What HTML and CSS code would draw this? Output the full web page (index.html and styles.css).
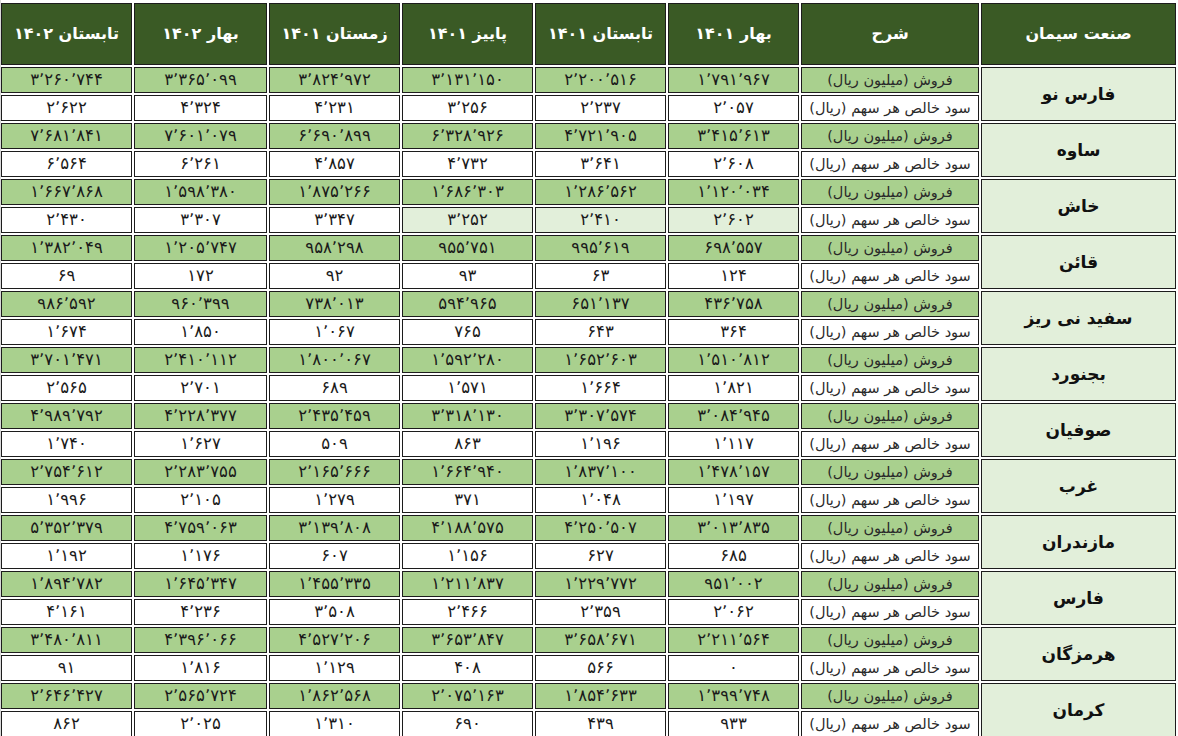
FILE: index.html
```html
<!DOCTYPE html>
<html lang="fa">
<head>
<meta charset="utf-8">
<title>صنعت سیمان</title>
<link rel="stylesheet" href="styles.css">
</head>
<body>
<div class="sheet" dir="rtl">
<table class="grid">
<colgroup>
<col class="c-name"><col class="c-desc"><col class="c-q"><col class="c-q"><col class="c-q"><col class="c-q"><col class="c-q5"><col class="c-q">
</colgroup>
<thead>
<tr class="head">
<th>صنعت سیمان</th><th>شرح</th><th>بهار ۱۴۰۱</th><th>تابستان ۱۴۰۱</th><th>پاییز ۱۴۰۱</th><th>زمستان ۱۴۰۱</th><th>بهار ۱۴۰۲</th><th>تابستان ۱۴۰۲</th>
</tr>
</thead>
<tbody>
<tr class="sales"><td class="name" rowspan="2">فارس نو</td><td class="desc">فروش (میلیون ریال)</td><td>۱٬۷۹۱٬۹۶۷</td><td>۲٬۲۰۰٬۵۱۶</td><td>۳٬۱۳۱٬۱۵۰</td><td>۳٬۸۲۴٬۹۷۲</td><td>۳٬۳۶۵٬۰۹۹</td><td>۳٬۲۶۰٬۷۴۴</td></tr>
<tr class="eps"><td class="desc">سود خالص هر سهم (ریال)</td><td>۲٬۰۵۷</td><td>۲٬۲۳۷</td><td>۳٬۲۵۶</td><td>۴٬۲۳۱</td><td>۴٬۳۲۴</td><td>۲٬۶۲۲</td></tr>

<tr class="sales"><td class="name" rowspan="2">ساوه</td><td class="desc">فروش (میلیون ریال)</td><td>۳٬۴۱۵٬۶۱۳</td><td>۴٬۷۲۱٬۹۰۵</td><td>۶٬۳۲۸٬۹۲۶</td><td>۶٬۶۹۰٬۸۹۹</td><td>۷٬۶۰۱٬۰۷۹</td><td>۷٬۶۸۱٬۸۴۱</td></tr>
<tr class="eps"><td class="desc">سود خالص هر سهم (ریال)</td><td>۲٬۶۰۸</td><td>۳٬۶۴۱</td><td>۴٬۷۳۲</td><td>۴٬۸۵۷</td><td>۶٬۲۶۱</td><td>۶٬۵۶۴</td></tr>

<tr class="sales"><td class="name" rowspan="2">خاش</td><td class="desc">فروش (میلیون ریال)</td><td>۱٬۱۲۰٬۰۳۴</td><td>۱٬۲۸۶٬۵۶۲</td><td>۱٬۶۸۶٬۳۰۳</td><td>۱٬۸۷۵٬۲۶۶</td><td>۱٬۵۹۸٬۳۸۰</td><td>۱٬۶۶۷٬۸۶۸</td></tr>
<tr class="eps"><td class="desc">سود خالص هر سهم (ریال)</td><td class="mark">۲٬۶۰۲</td><td class="mark">۲٬۴۱۰</td><td class="mark">۳٬۲۵۲</td><td>۳٬۳۴۷</td><td>۳٬۳۰۷</td><td>۲٬۴۳۰</td></tr>

<tr class="sales"><td class="name" rowspan="2">قائن</td><td class="desc">فروش (میلیون ریال)</td><td>۶۹۸٬۵۵۷</td><td>۹۹۵٬۶۱۹</td><td>۹۵۵٬۷۵۱</td><td>۹۵۸٬۲۹۸</td><td>۱٬۲۰۵٬۷۴۷</td><td>۱٬۳۸۲٬۰۴۹</td></tr>
<tr class="eps"><td class="desc">سود خالص هر سهم (ریال)</td><td>۱۲۴</td><td>۶۳</td><td>۹۳</td><td>۹۲</td><td>۱۷۲</td><td>۶۹</td></tr>

<tr class="sales"><td class="name" rowspan="2">سفید نی ریز</td><td class="desc">فروش (میلیون ریال)</td><td>۴۳۶٬۷۵۸</td><td>۶۵۱٬۱۳۷</td><td>۵۹۴٬۹۶۵</td><td>۷۳۸٬۰۱۳</td><td>۹۶۰٬۳۹۹</td><td>۹۸۶٬۵۹۲</td></tr>
<tr class="eps"><td class="desc">سود خالص هر سهم (ریال)</td><td>۳۶۴</td><td>۶۴۳</td><td>۷۶۵</td><td>۱٬۰۶۷</td><td>۱٬۸۵۰</td><td>۱٬۶۷۴</td></tr>

<tr class="sales"><td class="name" rowspan="2">بجنورد</td><td class="desc">فروش (میلیون ریال)</td><td>۱٬۵۱۰٬۸۱۲</td><td>۱٬۶۵۲٬۶۰۳</td><td>۱٬۵۹۲٬۲۸۰</td><td>۱٬۸۰۰٬۰۶۷</td><td>۲٬۴۱۰٬۱۱۲</td><td>۳٬۷۰۱٬۴۷۱</td></tr>
<tr class="eps"><td class="desc">سود خالص هر سهم (ریال)</td><td>۱٬۸۲۱</td><td>۱٬۶۶۴</td><td>۱٬۵۷۱</td><td>۶۸۹</td><td>۲٬۷۰۱</td><td>۲٬۵۶۵</td></tr>

<tr class="sales"><td class="name" rowspan="2">صوفیان</td><td class="desc">فروش (میلیون ریال)</td><td>۳٬۰۸۴٬۹۴۵</td><td>۳٬۳۰۷٬۵۷۴</td><td>۳٬۳۱۸٬۱۳۰</td><td>۲٬۴۳۵٬۴۵۹</td><td>۴٬۲۲۸٬۳۷۷</td><td>۴٬۹۸۹٬۷۹۲</td></tr>
<tr class="eps"><td class="desc">سود خالص هر سهم (ریال)</td><td>۱٬۱۱۷</td><td>۱٬۱۹۶</td><td>۸۶۳</td><td>۵۰۹</td><td>۱٬۶۲۷</td><td>۱٬۷۴۰</td></tr>

<tr class="sales"><td class="name" rowspan="2">غرب</td><td class="desc">فروش (میلیون ریال)</td><td>۱٬۴۷۸٬۱۵۷</td><td>۱٬۸۳۷٬۱۰۰</td><td>۱٬۶۶۴٬۹۴۰</td><td>۲٬۱۶۵٬۶۶۶</td><td>۲٬۲۸۳٬۷۵۵</td><td>۲٬۷۵۴٬۶۱۲</td></tr>
<tr class="eps"><td class="desc">سود خالص هر سهم (ریال)</td><td>۱٬۱۹۷</td><td>۱٬۰۴۸</td><td>۳۷۱</td><td>۱٬۲۷۹</td><td>۲٬۱۰۵</td><td>۱٬۹۹۶</td></tr>

<tr class="sales"><td class="name" rowspan="2">مازندران</td><td class="desc">فروش (میلیون ریال)</td><td>۳٬۰۱۳٬۸۳۵</td><td>۴٬۲۵۰٬۵۰۷</td><td>۴٬۱۸۸٬۵۷۵</td><td>۳٬۱۳۹٬۸۰۸</td><td>۴٬۷۵۹٬۰۶۳</td><td>۵٬۳۵۲٬۳۷۹</td></tr>
<tr class="eps"><td class="desc">سود خالص هر سهم (ریال)</td><td>۶۸۵</td><td>۶۲۷</td><td>۱٬۱۵۶</td><td>۶۰۷</td><td>۱٬۱۷۶</td><td>۱٬۱۹۲</td></tr>

<tr class="sales"><td class="name" rowspan="2">فارس</td><td class="desc">فروش (میلیون ریال)</td><td>۹۵۱٬۰۰۲</td><td>۱٬۲۲۹٬۷۷۲</td><td>۱٬۲۱۱٬۸۳۷</td><td>۱٬۴۵۵٬۳۳۵</td><td>۱٬۶۴۵٬۳۴۷</td><td>۱٬۸۹۴٬۷۸۲</td></tr>
<tr class="eps"><td class="desc">سود خالص هر سهم (ریال)</td><td>۲٬۰۶۲</td><td>۲٬۳۵۹</td><td>۲٬۴۶۶</td><td>۳٬۵۰۸</td><td>۴٬۲۳۶</td><td>۴٬۱۶۱</td></tr>

<tr class="sales"><td class="name" rowspan="2">هرمزگان</td><td class="desc">فروش (میلیون ریال)</td><td>۲٬۲۱۱٬۵۶۴</td><td>۳٬۶۵۸٬۶۷۱</td><td>۳٬۶۵۳٬۸۴۷</td><td>۴٬۵۲۷٬۲۰۶</td><td>۴٬۳۹۶٬۰۶۶</td><td>۳٬۴۸۰٬۸۱۱</td></tr>
<tr class="eps"><td class="desc">سود خالص هر سهم (ریال)</td><td>۰</td><td>۵۶۶</td><td>۴۰۸</td><td>۱٬۱۲۹</td><td>۱٬۸۱۶</td><td>۹۱</td></tr>

<tr class="sales"><td class="name" rowspan="2">کرمان</td><td class="desc">فروش (میلیون ریال)</td><td>۱٬۳۹۹٬۷۴۸</td><td>۱٬۸۵۴٬۶۳۳</td><td>۲٬۰۷۵٬۱۶۳</td><td>۱٬۸۶۲٬۵۶۸</td><td>۲٬۵۶۵٬۷۲۴</td><td>۲٬۶۴۶٬۴۲۷</td></tr>
<tr class="eps"><td class="desc">سود خالص هر سهم (ریال)</td><td>۹۳۳</td><td>۴۳۹</td><td>۶۹۰</td><td>۱٬۳۱۰</td><td>۲٬۰۲۵</td><td>۸۶۲</td></tr>
</tbody>
</table>
</div>
</body>
</html>
```
FILE: styles.css
```css
html, body {
  margin: 0;
  padding: 0;
  background: #ffffff;
}

body {
  width: 1178px;
  height: 736px;
  overflow: hidden;
  font-family: "DejaVu Sans", sans-serif;
  color: #1f1f1f;
}

.sheet {
  padding: 1px 0 0 3px;
  background: linear-gradient(to right, #d9d9d9 0, #d9d9d9 1px, transparent 1px) 0 0 / 100% 100% no-repeat, #ffffff;
}

.grid {
  table-layout: fixed;
  width: 1179px;
  border-collapse: separate;
  border-spacing: 2px;
}

.c-name { width: 195px; }
.c-desc { width: 178px; }
.c-q { width: 131px; }
.c-q5 { width: 133px; }

.grid th,
.grid td {
  box-sizing: border-box;
  border: 1px solid #1c1c1c;
  padding: 0;
  text-align: center;
  vertical-align: middle;
  white-space: nowrap;
  overflow: hidden;
}

.head {
  height: 62px;
}

.head th {
  background: #3a5a25;
  color: #ffffff;
  font-weight: bold;
  font-size: 16px;
  line-height: 1;
}

.sales,
.eps {
  height: 26px;
}

.grid td {
  font-size: 16.5px;
  line-height: 1;
  font-weight: normal;
  color: #1a1a1a;
}

.sales td {
  background: #a9d08e;
}

.eps td {
  background: #ffffff;
}

.eps td.mark {
  background: #e2efda;
}

.grid td.name {
  background: #e2efda;
  font-size: 17px;
  font-weight: bold;
  color: #111111;
}

.grid td.desc {
  font-size: 14.5px;
  font-weight: normal;
  color: #2a2a2a;
}
```
